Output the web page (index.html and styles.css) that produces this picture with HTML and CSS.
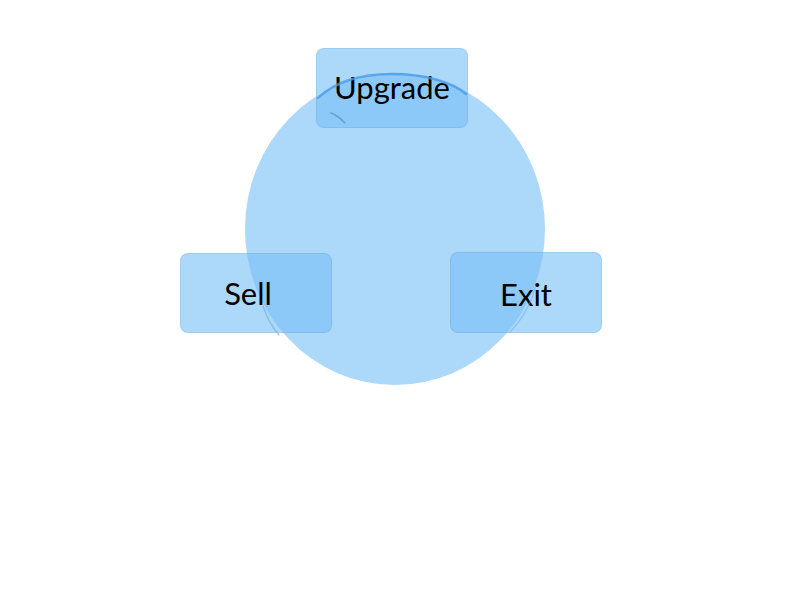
FILE: index.html
```html
<!DOCTYPE html>
<html lang="en">
<head>
  <meta charset="UTF-8">
  <meta name="viewport" content="width=device-width, initial-scale=1.0">
  <title>Radial Menu</title>
  <link rel="stylesheet" href="styles.css">
</head>
<body>
  <div class="menu">
    <!-- Centre disc -->
    <div class="disc"></div>

    <!-- Menu items -->
    <button class="item item-upgrade">Upgrade</button>
    <button class="item item-sell">Sell</button>
    <button class="item item-exit">Exit</button>

    <!-- Pen strokes drawn over the top -->
    <svg class="sketch" width="800" height="600" viewBox="0 0 800 600">
      <path d="M318 98 C 336 81, 362 74, 392 74 C 424 74, 452 82, 466 94" fill="none" stroke="#4a9be8" stroke-width="2.4" stroke-linecap="round" opacity="0.8"/>
      <path d="M331 113 C 337 115, 341 119, 345 123" fill="none" stroke="#3d7fc0" stroke-width="1.6" stroke-linecap="round" opacity="0.55"/>
      <path d="M263 306 C 267 318, 272 327, 279 335" fill="none" stroke="#5fa6e6" stroke-width="1.2" stroke-linecap="round" opacity="0.6"/>
      <path d="M536 285 C 532 302, 522 320, 510 332" fill="none" stroke="#5fa6e6" stroke-width="1.2" stroke-linecap="round" opacity="0.45"/>
    </svg>
  </div>
</body>
</html>
```

FILE: styles.css
```css
/* General Reset */
body {
  margin: 0;
  padding: 0;
  background: #ffffff;
  font-family: 'Lato', sans-serif;
}

/* Canvas */
.menu {
  position: relative;
  width: 800px;
  height: 600px;
  overflow: hidden;
}

.disc {
  position: absolute;
  left: 245px;
  top: 73px;
  width: 300px;
  height: 312px;
  border-radius: 50%;
  background: rgba(120, 192, 247, 0.61);
}

.sketch {
  position: absolute;
  left: 0;
  top: 0;
  pointer-events: none;
}

/* Items */
.item {
  position: absolute;
  display: flex;
  align-items: center;
  justify-content: center;
  width: 152px;
  height: 80px;
  padding: 0;
  border: 1px solid rgba(0, 0, 0, 0.06);
  border-radius: 8px;
  background: rgba(120, 192, 247, 0.61);
  color: #000000;
  font-family: 'Lato', sans-serif;
  font-size: 31px;
  line-height: 1;
  cursor: pointer;
}

.item-upgrade {
  left: 316px;
  top: 48px;
  padding-bottom: 2px;
}

.item-sell {
  left: 180px;
  top: 253px;
  padding-right: 16px;
}

.item-exit {
  left: 450px;
  top: 252px;
  height: 81px;
  padding-top: 4px;
}
```
